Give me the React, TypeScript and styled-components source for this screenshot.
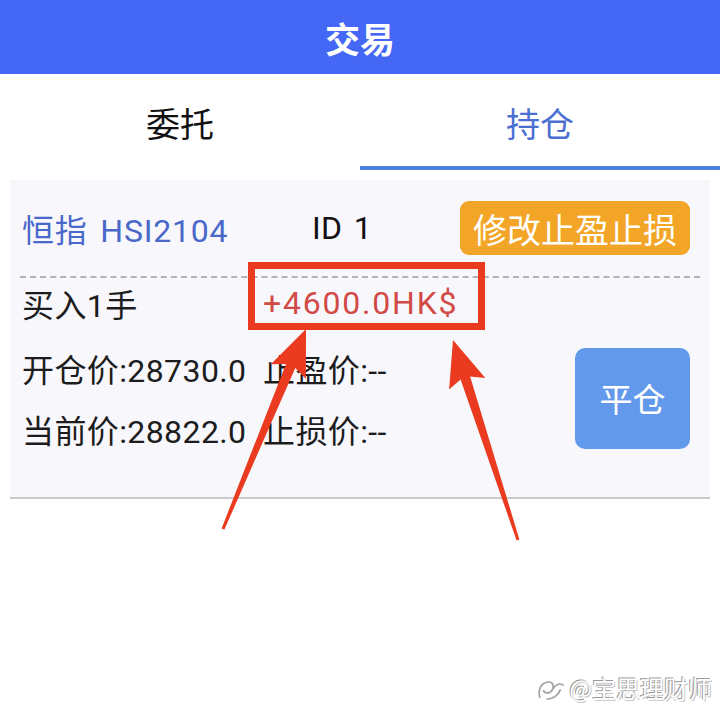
import React from 'react'
import styled, { createGlobalStyle } from 'styled-components'

const GlobalStyle = createGlobalStyle`
  html, body {
    margin: 0;
    padding: 0;
    background: #ffffff;
  }
  body {
    font-family: Roboto, "Noto Sans CJK SC", sans-serif;
  }
`

const Page = styled.div`
  position: relative;
  width: 720px;
  height: 725px;
  overflow: hidden;
  background: #ffffff;
`

const Header = styled.div`
  height: 74px;
  background: #4467f6;
  display: flex;
  align-items: center;
  justify-content: center;
  color: #ffffff;
  font-size: 35px;
  font-weight: 700;
  font-family: "Noto Sans CJK SC", sans-serif;
`

const Tabs = styled.div`
  display: flex;
  height: 96px;
`

const Tab = styled.div<{ $active?: boolean }>`
  flex: 1;
  display: flex;
  align-items: center;
  justify-content: center;
  font-size: 34px;
  font-family: "Noto Sans CJK SC", sans-serif;
  color: ${(p) => (p.$active ? '#4c6fd2' : '#111111')};
  border-bottom: 4px solid ${(p) => (p.$active ? '#4a80de' : 'transparent')};
  box-sizing: border-box;
  padding-top: 4px;
`

const Card = styled.div`
  margin: 10px 10px 0;
  background: #f7f7fc;
  border-bottom: 2px solid #cacaca;
  padding: 21px 0 38px;
  font-size: 32px;
  letter-spacing: 0.4px;
  color: #1c1c1c;
`

const TopRow = styled.div`
  display: flex;
  align-items: center;
  height: 54px;
  padding: 0 20px 0 12px;
`

const Symbol = styled.span`
  width: 290px;
  color: #4a68c9;
  letter-spacing: 0.8px;
  word-spacing: 4px;
`

const IdText = styled.span`
  flex: 1;
  color: #111111;
  word-spacing: 3px;
`

const EditButton = styled.button`
  height: 54px;
  width: 230px;
  border: none;
  border-radius: 9px;
  background: #f2a526;
  color: #ffffff;
  font-family: "Noto Sans CJK SC", sans-serif;
  font-size: 34px;
  padding: 0;
`

const Dashed = styled.div`
  margin: 21px 10px 0;
  border-top: 2px dashed #b4b4b4;
`

const InfoRow = styled.div`
  display: grid;
  grid-template-columns: 241px 1fr;
  align-items: center;
  height: 50px;
  padding-left: 12px;
`

const Profit = styled.span`
  color: #d24a45;
  letter-spacing: 1.8px;
`

const PriceGrid = styled.div`
  display: grid;
  grid-template-columns: 241px 1fr 115px;
  grid-template-rows: 61px 61px;
  align-items: center;
  margin-top: 9px;
  padding: 0 20px 0 12px;
`

const CloseButton = styled.button`
  grid-column: 3;
  grid-row: 1 / span 2;
  align-self: center;
  height: 101px;
  width: 115px;
  border: none;
  border-radius: 10px;
  background: #6399eb;
  color: #ffffff;
  font-family: "Noto Sans CJK SC", sans-serif;
  font-size: 33px;
  padding: 0;
`

const Overlay = styled.svg`
  position: absolute;
  left: 0;
  top: 0;
  pointer-events: none;
`

const Watermark = styled.div`
  position: absolute;
  right: 8px;
  bottom: 20px;
  display: flex;
  align-items: center;
  gap: 3px;
  font-family: "Noto Sans CJK SC", sans-serif;
  font-size: 24px;
  color: #ffffff;
  text-shadow: -1px -1px 0 #9a9a9a, 1px 1px 0 #c8c8c8;
`

type Pt = [number, number]

const arrowPoints = (tail: Pt, tip: Pt) => {
  const dx = tip[0] - tail[0]
  const dy = tip[1] - tail[1]
  const len = Math.hypot(dx, dy)
  const ux = dx / len
  const uy = dy / len
  const nx = -uy
  const ny = ux
  const head = 46
  const bx = tip[0] - ux * head
  const by = tip[1] - uy * head
  const p = (x: number, y: number) => `${x.toFixed(1)},${y.toFixed(1)}`
  return [
    p(tail[0] + nx * 1.5, tail[1] + ny * 1.5),
    p(bx + ux * 6 + nx * 5, by + uy * 6 + ny * 5),
    p(bx + nx * 19, by + ny * 19),
    p(tip[0], tip[1]),
    p(bx - nx * 19, by - ny * 19),
    p(bx + ux * 6 - nx * 5, by + uy * 6 - ny * 5),
    p(tail[0] - nx * 1.5, tail[1] - ny * 1.5),
  ].join(' ')
}

const App = () => {
  return (
    <Page>
      <GlobalStyle />
      <Header>交易</Header>
      <Tabs>
        <Tab>委托</Tab>
        <Tab $active>持仓</Tab>
      </Tabs>
      <Card>
        <TopRow>
          <Symbol>恒指 HSI2104</Symbol>
          <IdText>ID 1</IdText>
          <EditButton>修改止盈止损</EditButton>
        </TopRow>
        <Dashed />
        <InfoRow>
          <span>买入1手</span>
          <Profit>+4600.0HK$</Profit>
        </InfoRow>
        <PriceGrid>
          <span>开仓价:28730.0</span>
          <span>止盈价:--</span>
          <CloseButton>平仓</CloseButton>
          <span>当前价:28822.0</span>
          <span>止损价:--</span>
        </PriceGrid>
      </Card>

      <Overlay width={720} height={725} viewBox="0 0 720 725">
        <rect x={251.5} y={265.5} width={230} height={61} fill="none" stroke="#ea3a1f" strokeWidth={7} />
        <polygon points={arrowPoints([223, 529], [306, 329])} fill="#ea3a1f" />
        <polygon points={arrowPoints([518, 540], [453, 340])} fill="#ea3a1f" />
      </Overlay>

      <Watermark>
        <svg width="32" height="26" viewBox="0 0 34 28">
          <path
            d="M6 24 C4 18 6 10 13 8 C18 6 22 10 20 15 C18 20 12 21 10 17 M20 15 C23 10 28 8 31 11 M14 26 C20 26 26 22 28 16"
            fill="none"
            stroke="#a8a8a8"
            strokeWidth="2"
            strokeLinecap="round"
          />
        </svg>
        <span>@宝思理财师</span>
      </Watermark>
    </Page>
  )
}

export default App
